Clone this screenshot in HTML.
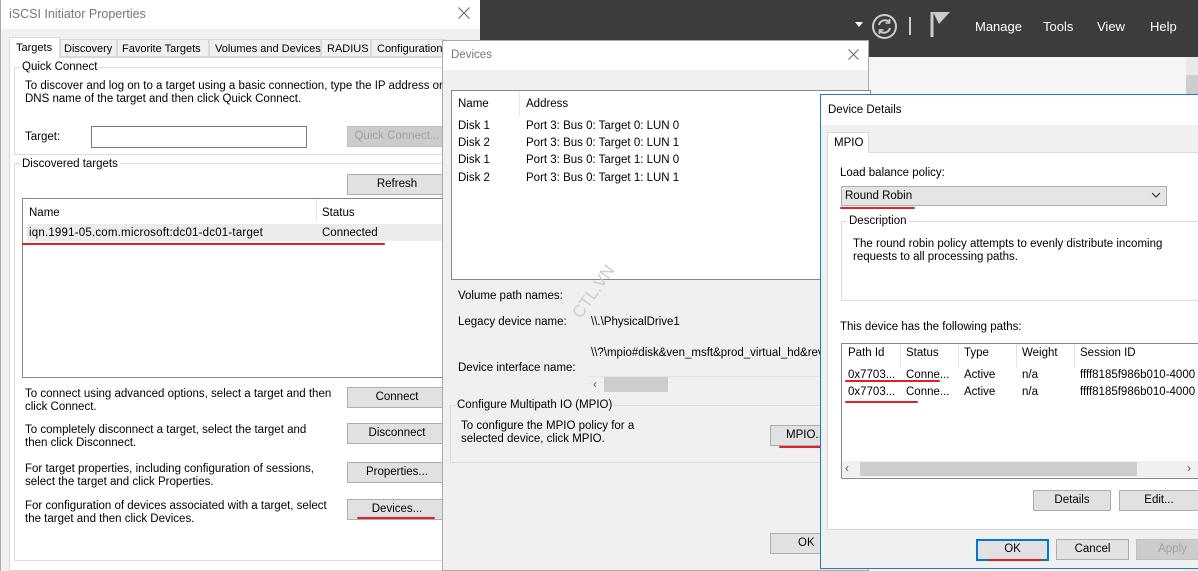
<!DOCTYPE html>
<html><head><meta charset="utf-8"><style>
*{margin:0;padding:0;box-sizing:border-box}
body{width:1198px;height:571px;overflow:hidden;position:relative;background:#f4f4f4;font-family:"Liberation Sans",sans-serif;font-size:11.5px;color:#000;line-height:16px}
.a{position:absolute;white-space:nowrap}
.btn{position:absolute;background:#e1e1e1;border:1px solid #adadad;text-align:center;line-height:18px;font-size:11.5px}
.dis{color:#a0a0a0;background:#cccccc;border-color:#bfbfbf}
.red{position:absolute;height:2px;background:#e3202a;border-radius:1px}
.grp{position:absolute;border:1px solid #dcdcdc}
.n{font-size:11.5px}
.tab{font-size:11px;line-height:14px}
</style></head><body>
<div class="a" style="left:480px;top:0;width:718px;height:57px;background:#3c3c3c"></div>
<div class="a" style="left:868px;top:57px;width:330px;height:514px;background:#f5f5f5"></div>
<div class="a" style="left:1186px;top:57px;width:12px;height:514px;background:#eaeaea"></div>
<div class="a" style="left:1186px;top:75px;width:12px;height:30px;background:#cdcdcd"></div>
<div class="a" style="left:855px;top:22px;width:0;height:0;border-left:4px solid transparent;border-right:4px solid transparent;border-top:5px solid #fff"></div>
<svg class="a" style="left:871px;top:13px" width="27" height="27" viewBox="0 0 27 27"><circle cx="13.5" cy="13.5" r="11.5" fill="none" stroke="#ccc" stroke-width="2"/><path d="M8 12a6 6 0 0 1 10.5-2.5M19 15a6 6 0 0 1-10.5 2.5" fill="none" stroke="#ccc" stroke-width="2"/><path d="M18.5 6v4h-4M8.5 21v-4h4" fill="none" stroke="#ccc" stroke-width="1.6"/></svg>
<div class="a" style="left:909px;top:17px;width:2px;height:18px;background:#ccc"></div>
<svg class="a" style="left:930px;top:11px" width="22" height="26"><path d="M2 1v25" stroke="#ccc" stroke-width="3"/><path d="M3 1h17l-11 12z" fill="#ccc"/></svg>
<div class="a" style="left:975px;top:19px;color:#fff;font-size:13px">Manage</div>
<div class="a" style="left:1043px;top:19px;color:#fff;font-size:13px">Tools</div>
<div class="a" style="left:1097px;top:19px;color:#fff;font-size:13px">View</div>
<div class="a" style="left:1150px;top:19px;color:#fff;font-size:13px">Help</div>

<!-- iSCSI window -->
<div class="a" style="left:0;top:0;width:480px;height:571px;background:#f0f0f0;border-left:1px solid #aaa"></div>
<div class="a" style="left:1px;top:0;width:479px;height:29px;background:#fff"></div>
<div class="a" style="left:9px;top:6px;color:#777;font-size:12.5px">iSCSI Initiator Properties</div>
<svg class="a" style="left:458px;top:7px" width="12" height="12"><path d="M0.5 0.5l11 11M11.5 0.5l-11 11" stroke="#666" stroke-width="1"/></svg>
<div class="a" style="left:9px;top:57px;width:440px;height:514px;background:#fff;border:1px solid #d9d9d9"></div>
<div class="a tab" style="left:9px;top:37px;width:51px;height:21px;background:#fff;border:1px solid #d9d9d9;border-bottom:none;padding:3px 0 0 6px">Targets</div>
<div class="a tab" style="left:60px;top:39px;width:57px;height:18px;border:1px solid #d9d9d9;padding:2px 0 0 3px">Discovery</div>
<div class="a tab" style="left:117px;top:39px;width:92px;height:18px;border:1px solid #d9d9d9;padding:2px 0 0 4px">Favorite Targets</div>
<div class="a tab" style="left:209px;top:39px;width:112px;height:18px;border:1px solid #d9d9d9;padding:2px 0 0 5px">Volumes and Devices</div>
<div class="a tab" style="left:321px;top:39px;width:50px;height:18px;border:1px solid #d9d9d9;padding:2px 0 0 5px">RADIUS</div>
<div class="a tab" style="left:371px;top:39px;width:75px;height:18px;border:1px solid #d9d9d9;padding:2px 0 0 5px;overflow:hidden">Configuration</div>
<div class="grp" style="left:14px;top:67px;width:440px;height:88px"></div>
<div class="a" style="left:20px;top:59px;background:#fff;padding:0 2px">Quick Connect</div>
<div class="a" style="left:25px;top:79px;line-height:13px;top:80px">To discover and log on to a target using a basic connection, type the IP address or<br>DNS name of the target and then click Quick Connect.</div>
<div class="a" style="left:25px;top:129px">Target:</div>
<div class="a" style="left:91px;top:126px;width:216px;height:22px;border:1px solid #7a7a7a;background:#fff"></div>
<div class="btn dis" style="left:347px;top:126px;width:100px;height:21px">Quick Connect...</div>
<div class="grp" style="left:14px;top:163px;width:440px;height:398px"></div>
<div class="a" style="left:20px;top:156px;background:#fff;padding:0 2px">Discovered targets</div>
<div class="btn" style="left:347px;top:174px;width:100px;height:21px">Refresh</div>
<div class="a" style="left:22px;top:198px;width:430px;height:180px;border:1px solid #828790;background:#fff"></div>
<div class="a" style="left:29px;top:205px">Name</div>
<div class="a" style="left:316px;top:199px;width:1px;height:22px;background:#e5e5e5"></div>
<div class="a" style="left:322px;top:205px">Status</div>
<div class="a" style="left:27px;top:224px;width:425px;height:17px;background:#ececec"></div>
<div class="a" style="left:29px;top:225px;letter-spacing:0.2px">iqn.1991-05.com.microsoft:dc01-dc01-target</div>
<div class="a" style="left:322px;top:225px">Connected</div>
<div class="red" style="left:22px;top:243px;width:363px"></div>
<div class="a" style="left:25px;top:388px;line-height:13px">To connect using advanced options, select a target and then<br>click Connect.</div>
<div class="btn" style="left:347px;top:387px;width:100px;height:21px">Connect</div>
<div class="a" style="left:25px;top:424px;line-height:13px">To completely disconnect a target, select the target and<br>then click Disconnect.</div>
<div class="btn" style="left:347px;top:423px;width:100px;height:21px">Disconnect</div>
<div class="a" style="left:25px;top:463px;line-height:13px">For target properties, including configuration of sessions,<br>select the target and click Properties.</div>
<div class="btn" style="left:347px;top:462px;width:100px;height:21px">Properties...</div>
<div class="a" style="left:25px;top:500px;line-height:13px">For configuration of devices associated with a target, select<br>the target and then click Devices.</div>
<div class="btn" style="left:347px;top:499px;width:100px;height:21px">Devices...</div>
<div class="red" style="left:357px;top:517px;width:78px"></div>

<!-- Devices dialog -->
<div class="a n" style="left:442px;top:40px;width:427px;height:531px;background:#f0f0f0;border:1px solid #aaa"></div>
<div class="a" style="left:443px;top:41px;width:425px;height:29px;background:#fff"></div>
<div class="a n" style="left:451px;top:47px;color:#777">Devices</div>
<svg class="a" style="left:848px;top:49px" width="11" height="11"><path d="M0.5 0.5l10 10M10.5 0.5l-10 10" stroke="#666" stroke-width="1"/></svg>
<div class="a" style="left:451px;top:90px;width:420px;height:190px;border:1px solid #828790;background:#fff"></div>
<div class="a n" style="left:458px;top:96px">Name</div>
<div class="a" style="left:519px;top:92px;width:1px;height:24px;background:#e5e5e5"></div>
<div class="a n" style="left:526px;top:96px">Address</div>
<div class="a n" style="left:458px;top:118px;line-height:17.2px">Disk 1<br>Disk 2<br>Disk 1<br>Disk 2</div>
<div class="a n" style="left:526px;top:118px;line-height:17.2px">Port 3: Bus 0: Target 0: LUN 0<br>Port 3: Bus 0: Target 0: LUN 1<br>Port 3: Bus 0: Target 1: LUN 0<br>Port 3: Bus 0: Target 1: LUN 1</div>
<div class="a" style="left:570px;top:312px;color:#ccc;font-size:17px;transform:rotate(-55deg);transform-origin:0 0">CTL.VN</div>
<div class="a n" style="left:458px;top:288px">Volume path names:</div>
<div class="a n" style="left:458px;top:314px">Legacy device name:</div>
<div class="a n" style="left:591px;top:314px">\\.\PhysicalDrive1</div>
<div class="a n" style="left:591px;top:345px">\\?\mpio#disk&amp;ven_msft&amp;prod_virtual_hd&amp;rev_</div>
<div class="a n" style="left:458px;top:360px">Device interface name:</div>
<div class="a" style="left:588px;top:376px;width:232px;height:17px;background:#f0f0f0;border-top:1px solid #e5e5e5"></div>
<div class="a" style="left:593px;top:376px;color:#555;font-size:12px">‹</div>
<div class="a" style="left:604px;top:377px;width:64px;height:15px;background:#cdcdcd"></div>
<div class="grp" style="left:450px;top:405px;width:380px;height:58px"></div>
<div class="a n" style="left:455px;top:397px;background:#f0f0f0;padding:0 2px">Configure Multipath IO (MPIO)</div>
<div class="a n" style="left:461px;top:420px;line-height:13px">To configure the MPIO policy for a<br>selected device, click MPIO.</div>
<div class="btn n" style="left:770px;top:425px;width:60px;height:21px;text-align:left;padding-left:15px">MPIO...</div>
<div class="red" style="left:779px;top:446px;width:43px"></div>
<div class="btn n" style="left:770px;top:533px;width:60px;height:21px;text-align:left;padding-left:27px">OK</div>

<!-- Device Details -->
<div class="a n" style="left:820px;top:94px;width:380px;height:475px;background:#f0f0f0;border:1px solid #1e7bd6"></div>
<div class="a" style="left:821px;top:95px;width:377px;height:30px;background:#fff"></div>
<div class="a n" style="left:828px;top:102px">Device Details</div>
<div class="a" style="left:827px;top:152px;width:372px;height:378px;background:#fff;border:1px solid #d9d9d9"></div>
<div class="a n" style="left:827px;top:132px;width:42px;height:21px;background:#fff;border:1px solid #d9d9d9;border-bottom:none;padding:2px 0 0 6px">MPIO</div>
<div class="a n" style="left:840px;top:165px">Load balance policy:</div>
<div class="a" style="left:841px;top:186px;width:326px;height:20px;background:#e5e5e5;border:1px solid #adadad"></div>
<div class="a n" style="left:845px;top:188px">Round Robin</div>
<svg class="a" style="left:1151px;top:192px" width="10" height="7"><path d="M1 1l4 4 4-4" fill="none" stroke="#333" stroke-width="1.2"/></svg>
<div class="red" style="left:840px;top:207px;width:75px"></div>
<div class="grp" style="left:841px;top:221px;width:360px;height:80px"></div>
<div class="a n" style="left:847px;top:213px;background:#fff;padding:0 2px">Description</div>
<div class="a n" style="left:853px;top:238px;line-height:13px">The round robin policy attempts to evenly distribute incoming<br>requests to all processing paths.</div>
<div class="a n" style="left:840px;top:319px">This device has the following paths:</div>
<div class="a" style="left:841px;top:343px;width:360px;height:136px;border:1px solid #828790;background:#fff"></div>
<div class="a n" style="left:848px;top:345px">Path Id</div>
<div class="a n" style="left:906px;top:345px">Status</div>
<div class="a n" style="left:964px;top:345px">Type</div>
<div class="a n" style="left:1022px;top:345px">Weight</div>
<div class="a n" style="left:1080px;top:345px">Session ID</div>
<div class="a" style="left:900px;top:344px;width:1px;height:24px;background:#e5e5e5"></div>
<div class="a" style="left:958px;top:344px;width:1px;height:24px;background:#e5e5e5"></div>
<div class="a" style="left:1016px;top:344px;width:1px;height:24px;background:#e5e5e5"></div>
<div class="a" style="left:1074px;top:344px;width:1px;height:24px;background:#e5e5e5"></div>
<div class="a n" style="left:848px;top:367px;line-height:17px">0x7703...<br>0x7703...</div>
<div class="a n" style="left:906px;top:367px;line-height:17px">Conne...<br>Conne...</div>
<div class="a n" style="left:964px;top:367px;line-height:17px">Active<br>Active</div>
<div class="a n" style="left:1022px;top:367px;line-height:17px">n/a<br>n/a</div>
<div class="a n" style="left:1080px;top:367px;line-height:17px">ffff8185f986b010-4000<br>ffff8185f986b010-4000</div>
<div class="red" style="left:845px;top:380px;width:95px"></div>
<div class="red" style="left:845px;top:401px;width:73px"></div>
<div class="a" style="left:842px;top:461px;width:358px;height:16px;background:#f0f0f0"></div>
<div class="a" style="left:845px;top:460px;color:#555;font-size:12px">‹</div>
<div class="a" style="left:1187px;top:460px;color:#555;font-size:12px">›</div>
<div class="a" style="left:860px;top:462px;width:277px;height:14px;background:#cdcdcd"></div>
<div class="btn n" style="left:1033px;top:490px;width:78px;height:21px">Details</div>
<div class="btn n" style="left:1119px;top:490px;width:80px;height:21px">Edit...</div>
<div class="btn n" style="left:976px;top:539px;width:73px;height:22px;border:2px solid #0078d7;line-height:17px">OK</div>
<div class="red" style="left:988px;top:559px;width:54px"></div>
<div class="btn n" style="left:1056px;top:539px;width:73px;height:21px">Cancel</div>
<div class="btn n dis" style="left:1136px;top:539px;width:73px;height:21px">Apply</div>
</body></html>
